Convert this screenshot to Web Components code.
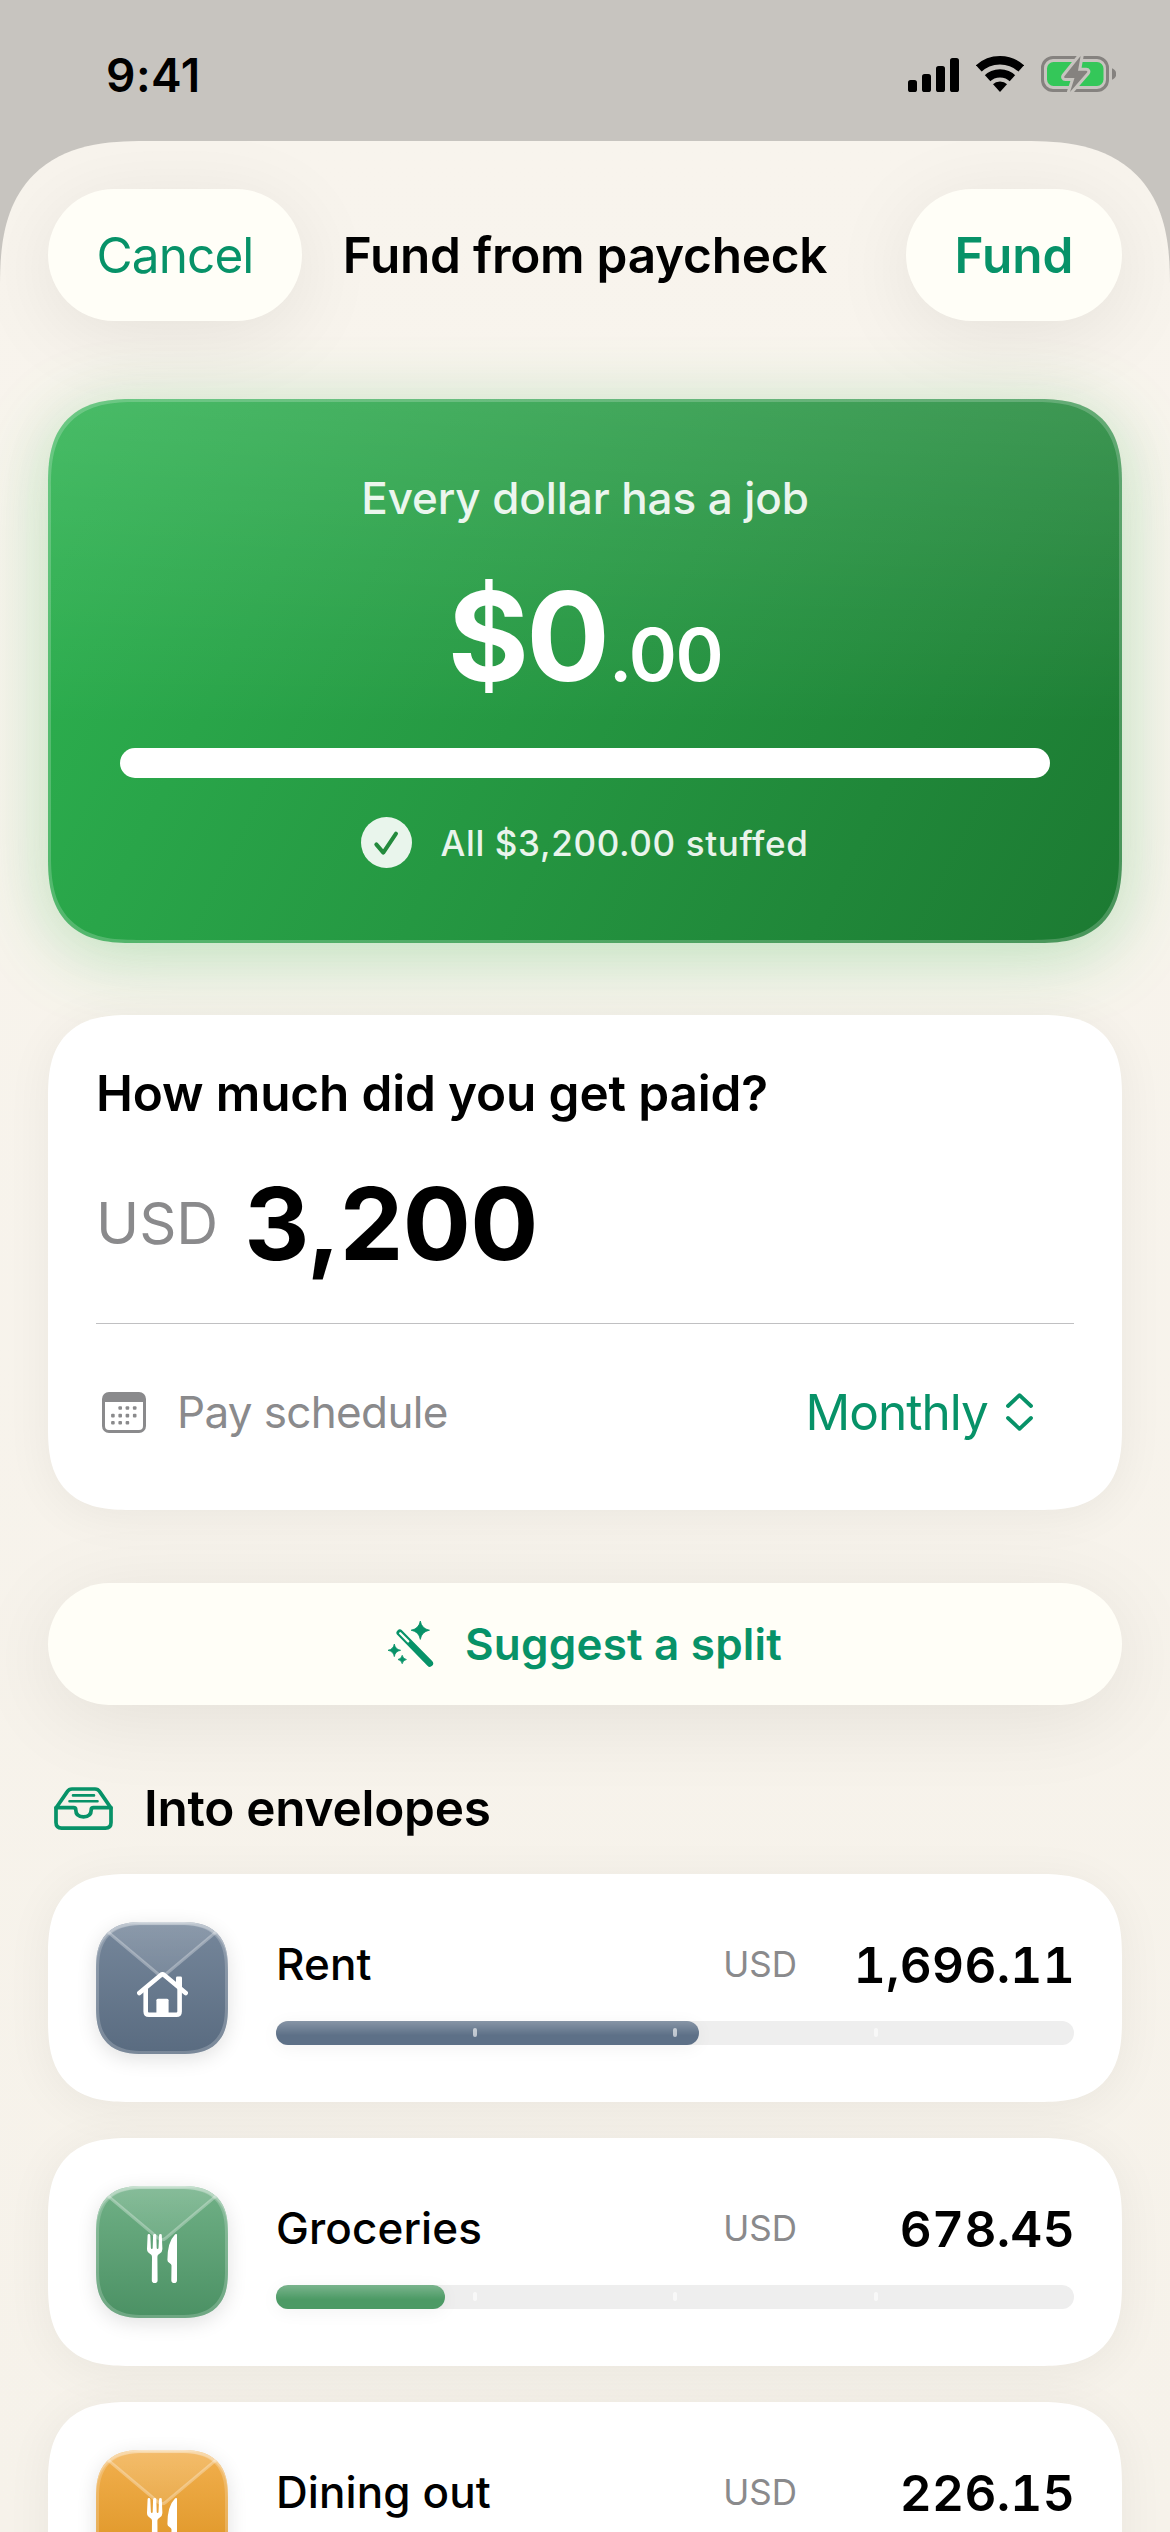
<!DOCTYPE html>
<html lang="en">
<head>
<meta charset="utf-8">
<title>Fund from paycheck</title>
<style>
html,body{margin:0;padding:0}
body{width:1170px;height:2532px;overflow:hidden;background:#c7c4bf;font-family:Inter,"Liberation Sans",sans-serif;color:#000;--accent:#079268;--muted:#8a8a8c}
</style>
</head>
<body>
<fund-screen></fund-screen>
<script>
const define = (name, html, setup) => {
  const template = document.createElement('template');
  template.innerHTML = html;
  customElements.define(name, class extends HTMLElement {
    connectedCallback() {
      if (this.shadowRoot) return;
      const root = this.attachShadow({ mode: 'open' });
      root.append(template.content.cloneNode(true));
      if (setup) setup(this, root);
    }
  });
};

define('status-bar', `
<style>
:host{display:flex;height:141px;box-sizing:border-box;padding:4px 54px 0 106px;justify-content:space-between;align-items:center}
.time{font-size:46px;line-height:56px;font-weight:600;letter-spacing:.5px;margin-top:4px}
.icons{display:flex;align-items:center;gap:17px;margin-top:3px}
svg{display:block}
</style>
<span class="time">9:41</span>
<div class="icons">
  <svg width="51" height="36" viewBox="0 0 51 36"><rect x="0" y="24" width="9" height="12" rx="2.6"/><rect x="14" y="18" width="9" height="18" rx="2.6"/><rect x="28" y="10" width="9" height="26" rx="2.6"/><rect x="42" y="2" width="9" height="34" rx="2.6"/></svg>
  <svg width="48" height="36" viewBox="0 0 48 36"><defs><clipPath id="w"><path d="M24 36L-12 -4H60Z"/></clipPath></defs><g clip-path="url(#w)" fill="none" stroke="#000"><circle cx="24" cy="36" r="31.7" stroke-width="8.4"/><circle cx="24" cy="36" r="18.7" stroke-width="8.2"/><circle cx="24" cy="36" r="10.5" fill="#000" stroke="none"/></g></svg>
  <svg width="75" height="38" viewBox="0 0 75 38"><rect x="1.5" y="2.5" width="65" height="33" rx="10.5" fill="none" stroke="#85827f" stroke-width="3"/><rect x="6" y="7" width="56.5" height="24" rx="6.5" fill="#34c759"/><path d="M71 13.2c3 1.2 4.300 3.500 4.300 5.800s-1.300 4.600-4.300 5.800z" fill="#85827f"/><path d="M39.600 1L23.400 21.200c-.6.9-.2 1.700.8 1.700h9.300L29 37l17-19.500c.7-.9.3-1.800-.8-1.800H37z" fill="#85827f" stroke="#c7c4bf" stroke-width="6" stroke-linejoin="round" paint-order="stroke"/></svg>
</div>`);

define('pill-button', `
<style>
:host{display:flex;align-items:center;justify-content:center;box-sizing:border-box;height:132px;border-radius:66px;background:#fffef7;color:var(--accent);box-shadow:0 14px 84px rgba(0,0,0,.08);font-size:49.5px;line-height:60px;letter-spacing:-.9px}
:host([wide]){height:122px;border-radius:61px;font-size:44px;font-weight:600;gap:31px;letter-spacing:.2px}
:host([strong]){font-weight:600;letter-spacing:0}
</style><slot name="icon"></slot><span><slot></slot></span>`);

define('sheet-header', `
<style>
:host{display:grid;grid-template-columns:1fr auto 1fr;align-items:center}
h1{margin:0;font-size:49.500px;line-height:60px;font-weight:600;letter-spacing:-.25px;white-space:nowrap}
.cancel{width:254px}
.fund{width:216px;justify-self:end}
</style>
<pill-button class="cancel">Cancel</pill-button><h1>Fund from paycheck</h1><pill-button class="fund" strong>Fund</pill-button>`);

define('job-card', `
<style>
:host{display:flex;flex-direction:column;align-items:center;box-sizing:border-box;height:544px;border-radius:68px;padding:69px 72px 0;color:#fff;
background:linear-gradient(180deg,rgba(255,255,255,.135),rgba(255,255,255,0) 60%),linear-gradient(116.900deg,#2db250,#1c7a32);
box-shadow:inset 0 0 0 3px rgba(255,255,255,.2),0 14px 72px rgba(52,199,89,.27),0 4px 60px rgba(60,80,40,.05)}
@supports (corner-shape:superellipse(1.4)){:host{border-radius:86px;corner-shape:superellipse(1.4)}}
.lead{font-size:44px;line-height:60px;font-weight:500;opacity:.9;letter-spacing:-.1px}
.total{display:flex;align-items:baseline;line-height:130px;margin-top:43px;font-weight:700;font-size:124px}
.whole{letter-spacing:-2.800px}
.total small{font-size:73px;font-weight:600;letter-spacing:-1.500px;margin-left:2px}
.bar{align-self:stretch;height:30px;border-radius:15px;background:#fff;margin-top:28px}
.done{display:flex;align-items:center;gap:28px;margin-top:39px;font-size:35px;line-height:50px;font-weight:500;opacity:.9;letter-spacing:.65px}
svg{display:block}
</style>
<span class="lead">Every dollar has a job</span>
<div class="total"><span class="whole">$0</span><small>.00</small></div>
<div class="bar"></div>
<div class="done"><svg width="51" height="51" viewBox="0 0 51 51"><circle cx="25.500" cy="25.500" r="25.500" fill="#fff"/><path d="M15.300 27.400l7 8.200L35 16.700" fill="none" stroke="#23893d" stroke-width="4" stroke-linecap="round" stroke-linejoin="round"/></svg><span>All $3,200.00 stuffed</span></div>`);

define('pay-card', `
<style>
:host{display:flex;flex-direction:column;box-sizing:border-box;height:495px;padding:48px;border-radius:66px;background:#fff;box-shadow:0 6px 48px rgba(0,0,0,.055)}
@supports (corner-shape:superellipse(1.4)){:host{border-radius:82px;corner-shape:superellipse(1.4)}}
h2{margin:0;font-size:49.500px;line-height:60px;font-weight:600;letter-spacing:-.15px}
.amount{display:flex;align-items:center;margin-top:38px;height:124px;gap:26px}
.code{font-size:58px;color:var(--muted)}
.value{font-size:101px;line-height:124px;font-weight:700;letter-spacing:-.6px}
hr{border:0;height:1px;background:#c0c0c2;margin:38px 0 0}
.row{display:flex;align-items:center;height:60px;margin-top:58px;padding:0 41px 0 6px}
.label{font-size:44px;color:var(--muted);margin-left:31px;letter-spacing:-.65px}
.pick{margin-left:auto;font-size:49.500px;color:var(--accent);display:flex;align-items:center;gap:18px;letter-spacing:-.95px}
svg{display:block}
</style>
<h2>How much did you get paid?</h2>
<div class="amount"><span class="code">USD</span><span class="value">3,200</span></div>
<hr>
<div class="row">
<svg width="44" height="41" viewBox="0 0 44 41"><rect x="1.500" y="1.500" width="41" height="38" rx="5.500" fill="none" stroke="#8a8a8c" stroke-width="3"/><path d="M1.500 10V6a4.500 4.500 0 0 1 4.500-4.500h32A4.500 4.500 0 0 1 42.500 6v4z" fill="#8a8a8c"/><g fill="#8a8a8c" id="d"></g></svg>
<span class="label">Pay schedule</span>
<span class="pick"><span>Monthly</span><svg width="27" height="38" viewBox="0 0 27 38" fill="none" stroke="#079268" stroke-width="3.800" stroke-linecap="round" stroke-linejoin="round"><path d="M2 13L13.500 2.200 25 13M2 25l11.500 10.800L25 25"/></svg></span>
</div>`, (el, root) => {
  const cols = [10.9, 18.2, 25.4, 32.7];
  const rows = [[16, 1, 4], [23.600, 0, 4], [30.800, 0, 3]];
  const g = root.getElementById('d');
  rows.forEach(([y, a, b]) => cols.slice(a, b).forEach(x => {
    const r = document.createElementNS('http://www.w3.org/2000/svg', 'rect');
    Object.entries({ x: x - 1.8, y: y - 1.8, width: 3.6, height: 3.6, rx: 1 }).forEach(([k, v]) => r.setAttribute(k, v));
    g.append(r);
  }));
});

define('section-title', `
<style>
:host{display:flex;align-items:center;gap:31px;padding-left:6px;height:60px}
h2{margin:0;font-size:49.500px;line-height:60px;font-weight:600;letter-spacing:-.25px}
svg{display:block}
</style>
<svg width="59" height="43" viewBox="0 0 59 43" fill="none" stroke="#079268" stroke-width="3.700" stroke-linejoin="round" stroke-linecap="round"><path d="M2 21L13.300 4.600Q15 2 18 2h23q3 0 4.700 2.600L57 21v14.500q0 5.600-5.600 5.600H7.600Q2 41.100 2 35.500z"/><path d="M2 20.700h17.500q2.300 0 2.300 2.300 0 6.800 7.700 6.800t7.700-6.800q0-2.300 2.300-2.300H57"/><path stroke-width="2.600" d="M19 8.400h21M15.500 14.200h28"/></svg>
<h2><slot></slot></h2>`);

const glyphs = {
  house: `<svg width="51" height="45" viewBox="0 0 51 45" fill="none" stroke="#fff" stroke-width="4.600" stroke-linecap="round" stroke-linejoin="round"><path d="M2.300 21L23.600 3.200q1.900-1.500 3.800 0L48.700 21"/><path d="M8.700 17v22.500q0 3.200 3.200 3.200h27.500q3.200 0 3.200-3.200V17"/><path d="M19.400 28.300q0-1.500 1.500-1.500h9.200q1.500 0 1.500 1.500V42H19.400z" fill="#fff" stroke="none"/><path d="M39 6q0-1.400 1.400-1.400h3.200Q45 4.600 45 6v13l-6-5z" fill="#fff" stroke="none"/></svg>`,
  fork: `<svg width="30" height="49" viewBox="0 0 30 49" fill="#fff"><path d="M.6 1.300Q.7 0 1.900 0T3.300 1.300L3.900 14q.1 1 .9 1t.9-1L6.100 1.300Q6.200 0 7.700 0t1.600 1.300L9.700 14q.1 1 .9 1t.9-1L12.100 1.300Q12.200 0 13.500 0t1.300 1.300L15.400 15q0 3.200-2.900 4.700-2.200 1.100-2.100 3L10.600 46.200Q10.600 49 7.700 49T4.800 46.200L5 22.700q.1-1.900-2.100-3Q0 18.200 0 15z"/><path d="M30 1.200V46.200Q30 49 27.200 49t-2.900-2.800L24.500 31.500q0-1.600-2-2.600-2.100-1-2.100-2.900 0-18 7.600-25.500Q30-.9 30 1.200z"/></svg>`
};

define('envelope-row', `
<style>
:host{display:flex;box-sizing:border-box;height:228px;padding:48px;gap:48px;border-radius:66px;background:#fff;box-shadow:0 6px 48px rgba(0,0,0,.055);flex:none}
.tile{display:grid;place-items:center;position:relative;width:132px;height:132px;border-radius:37px;overflow:hidden;background:linear-gradient(var(--hi),var(--lo))}
.shadow{border-radius:37px;box-shadow:0 5px 20px rgba(0,0,0,.12);height:132px}
@supports (corner-shape:superellipse(1.4)){:host{border-radius:82px;corner-shape:superellipse(1.4)}.tile,.shadow,.rim{border-radius:48px!important;corner-shape:superellipse(1.4)}}
.flap,.rim{position:absolute;inset:0}
.rim{border-radius:37px;box-shadow:inset 0 0 0 3px rgba(255,255,255,.2),inset 0 3px 1px rgba(255,255,255,.3)}
.icon{position:relative;margin-top:13px}
.icon svg,.flap{display:block}
.body{flex:1;display:flex;flex-direction:column}
.line{display:flex;align-items:center;height:60px;margin-top:13px}
.name{font-size:44px;line-height:60px;font-weight:500;letter-spacing:.1px;margin-top:-2px}
.code{font-size:35px;line-height:60px;color:var(--muted);margin-left:auto;margin-top:-3px}
.sum{font-size:49.500px;line-height:60px;font-weight:600;font-variant-numeric:tabular-nums;letter-spacing:.3px;width:278px;margin-right:-1px;text-align:right}
.track{position:relative;display:flex;height:24px;border-radius:12px;background:#eee;margin-top:26px}
.fill{height:24px;border-radius:12px;background:linear-gradient(rgba(255,255,255,.26),rgba(255,255,255,0) 60%),var(--bar);box-shadow:0 3px 18px rgba(0,0,0,.05)}
.ticks{position:absolute;inset:0;display:flex;justify-content:space-evenly;align-items:center}
.ticks i{width:4px;height:9px;border-radius:2px;background:rgba(255,255,255,.6);margin-top:-2px}
</style>
<div class="shadow"><div class="tile">
<svg class="flap" width="132" height="132" viewBox="0 0 132 132"><defs><linearGradient id="f" x1="0" y1="0" x2="0" y2="1"><stop offset="0" stop-color="#fff" stop-opacity=".16"/><stop offset="1" stop-color="#fff" stop-opacity=".1"/></linearGradient></defs><path d="M0 0L62 52q4 3.500 8 0L132 0z" fill="url(#f)" stroke="#fff" stroke-opacity=".3" stroke-width="3"/></svg>
<div class="rim"></div><div class="icon"></div></div></div>
<div class="body">
<div class="line"><span class="name"><slot></slot></span><span class="code">USD</span><span class="sum"></span></div>
<div class="track"><div class="fill"></div><div class="ticks"><i></i><i></i><i></i></div></div>
</div>`, (el, root) => {
  root.querySelector('.icon').innerHTML = glyphs[el.getAttribute('glyph')];
  root.querySelector('.sum').textContent = el.getAttribute('amount');
  root.querySelector('.fill').style.width = el.getAttribute('share') + '%';
});

define('fund-screen', `
<style>
:host{display:flex;flex-direction:column;width:1170px;height:2532px;overflow:hidden}
main{flex:1;min-height:0;overflow:hidden;display:flex;flex-direction:column;box-sizing:border-box;padding:48px 48px 0;background:linear-gradient(#f8f4ed,#f6f2ea);border-radius:114px 114px 0 0}
@supports (corner-shape:superellipse(1.4)){main{border-radius:146px 146px 0 0;corner-shape:superellipse(1.400)}}
job-card{margin-top:78px}
pay-card{margin-top:72px}
.split{margin-top:73px;flex:none}
section-title{margin-top:73px;flex:none}
.list{display:flex;flex-direction:column;gap:36px;margin-top:36px}
job-card,pay-card{flex:none}
</style>
<status-bar></status-bar>
<main>
<sheet-header></sheet-header>
<job-card></job-card>
<pay-card></pay-card>
<pill-button class="split" wide><svg slot="icon" width="46" height="46" viewBox="0 0 46 46" fill="#079268"><path d="M11.800 11.800L41.800 42.400" stroke="#079268" stroke-width="6.600" stroke-linecap="round"/><path d="M12.200 12.200L20.200 20.400" stroke="#fffef7" stroke-width="2.300" stroke-linecap="round"/><path d="M32.300 0q1.300 7.700 9.200 9.200-7.900 1.500-9.200 9.200-1.300-7.700-9.200-9.200 7.900-1.500 9.200-9.200zM6.300 23q.9 5.300 6.300 6.300-5.400 1-6.300 6.300-.9-5.300-6.300-6.300 5.400-1 6.300-6.300zM14.200 34.300q.6 3.500 4.200 4.200-3.600.7-4.200 4.200-.6-3.500-4.200-4.200 3.600-.7 4.200-4.200z" stroke="#079268" stroke-width=".8" stroke-linejoin="round"/></svg>Suggest a split</pill-button>
<section-title>Into envelopes</section-title>
<div class="list">
<envelope-row glyph="house" amount="1,696.11" share="53" style="--hi:#76879b;--lo:#596b80;--bar:#5d7087">Rent</envelope-row>
<envelope-row glyph="fork" amount="678.45" share="21.2" style="--hi:#70b086;--lo:#4b9164;--bar:#4c9a65">Groceries</envelope-row>
<envelope-row glyph="fork" amount="226.15" share="7.070" style="--hi:#f2b04f;--lo:#d98f1c;--bar:#e29b2b">Dining out</envelope-row>
</div>
</main>`);
</script>
</body>
</html>
